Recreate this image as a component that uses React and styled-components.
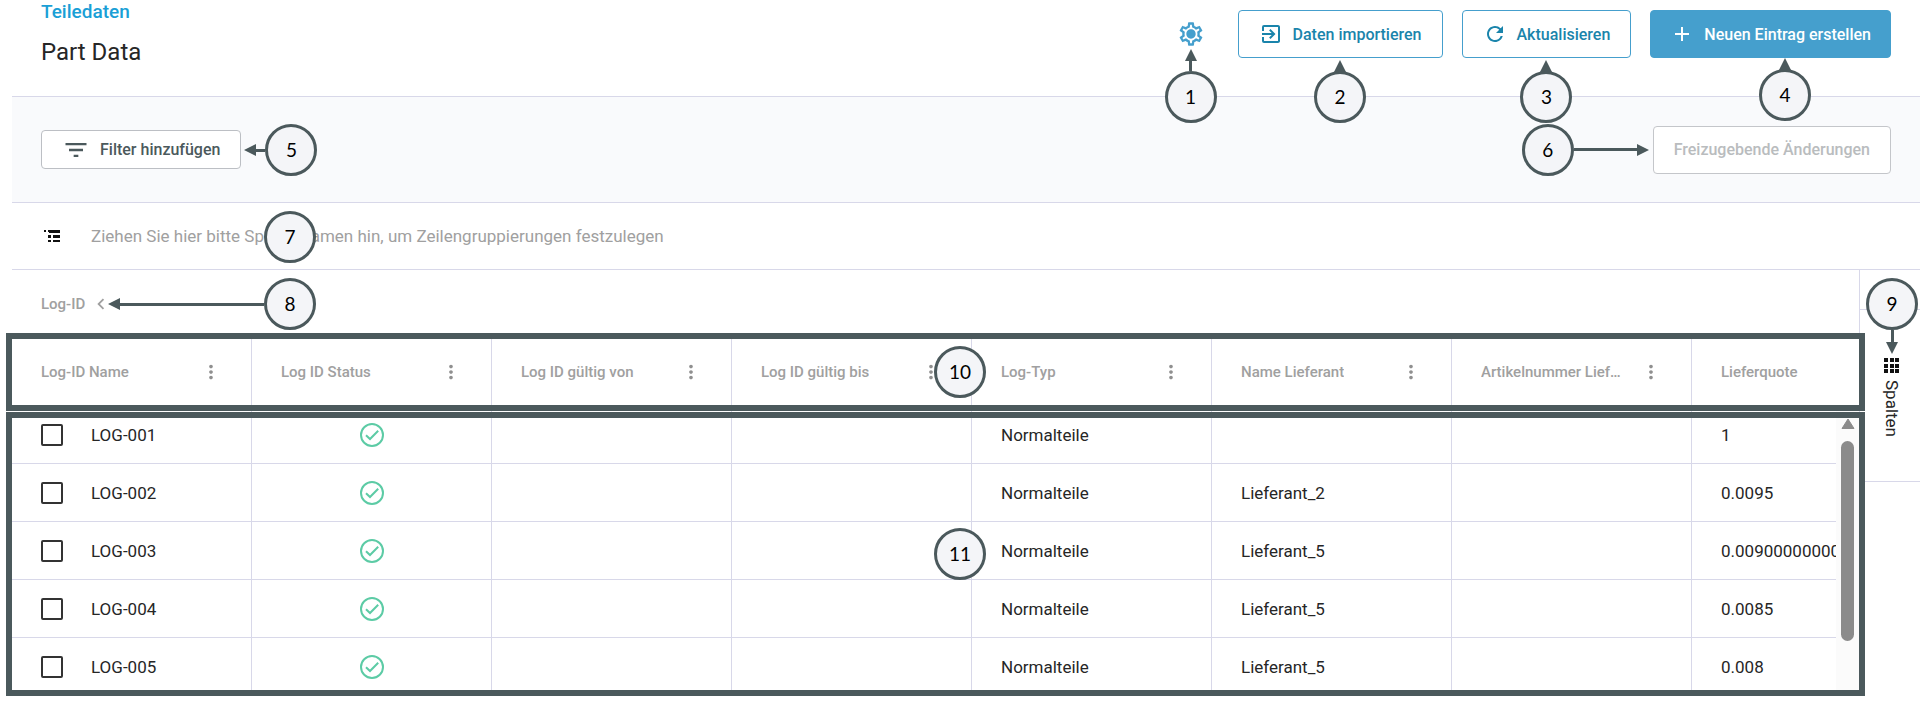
import React from 'react';
import styled, { createGlobalStyle, css } from 'styled-components';
import {
  MdAdd,
  MdChevronLeft,
  MdExitToApp,
  MdFilterList,
  MdMoreVert,
  MdOutlineSettings,
  MdRefresh,
} from 'react-icons/md';

const color = {
  ink: '#4b595c',
  line: '#d8d8e9',
  blue: '#459fcd',
  link: '#1a9fd6',
  action: '#1a84ab',
  gray: '#a0a0a0',
  text: '#262626',
  green: '#5ccba5',
  bar: '#f9fafc',
};

const GlobalStyle = createGlobalStyle`
  * { box-sizing: border-box; }
  body {
    margin: 0;
    background: #fff;
    color: ${color.text};
    font-family: Roboto, 'Liberation Sans', sans-serif;
    font-size: 17px;
  }
  button, input { font: inherit; margin: 0; }
  h1, h2, p { margin: 0; }
`;

const S = {
  Page: styled.main`
    padding: 0 0 10px 12px;
  `,
  Header: styled.header`
    display: flex;
    justify-content: space-between;
    height: 97px;
    padding: 0 29px;
    border-bottom: 1px solid ${color.line};
  `,
  Category: styled.p`
    color: ${color.link};
    font-size: 19px;
    font-weight: 500;
    line-height: 24px;
  `,
  Title: styled.h1`
    margin-top: 16px;
    font-size: 24px;
    font-weight: 400;
    line-height: 24px;
  `,
  Actions: styled.div`
    display: flex;
    align-items: flex-start;
    gap: 19px;
    padding-top: 10px;
  `,
  Anchor: styled.div`
    position: relative;
    display: flex;
  `,
  IconButton: styled.button`
    display: flex;
    align-items: center;
    justify-content: center;
    width: 56px;
    height: 48px;
    padding: 0;
    border: 0;
    background: none;
    color: ${color.blue};
  `,
  Button: styled.button`
    display: flex;
    align-items: center;
    gap: 10px;
    height: ${props => (props.$small ? '39px' : '48px')};
    padding: 0 20px;
    border: 1px solid ${color.blue};
    border-radius: 4px;
    background: #fff;
    color: ${color.action};
    font-size: 16px;
    font-weight: 500;
    white-space: nowrap;
    ${props => props.$primary && css`
      padding: 0 19px;
      background: ${color.blue};
      color: #fff;
    `}
    ${props => props.$neutral && css`
      border-color: #bcbfc4;
      color: ${color.ink};
    `}
    &:disabled {
      border-color: #c4c6ca;
      color: #b9bcbe;
    }
  `,
  FilterBar: styled.section`
    display: flex;
    align-items: center;
    justify-content: space-between;
    height: 106px;
    padding: 0 29px;
    border-bottom: 1px solid ${color.line};
    background: ${color.bar};
  `,
  GroupBar: styled.section`
    position: relative;
    display: flex;
    align-items: center;
    height: 67px;
    padding: 0 29px;
    gap: 28px;
    border-bottom: 1px solid ${color.line};
    color: ${color.gray};
  `,
  Content: styled.div`
    display: flex;
  `,
  Grid: styled.section`
    position: relative;
    flex: 1;
    min-width: 0;
    height: 420px;
  `,
  Viewport: styled.div`
    height: 100%;
    overflow: hidden;
  `,
  Table: styled.table`
    width: 100%;
    border-collapse: separate;
    border-spacing: 0;
    table-layout: fixed;
  `,
  Col: styled.col`
    width: ${props => (props.$fill ? 'auto' : '240px')};
  `,
  Group: styled.th`
    height: 68px;
    padding: 0 29px;
    color: ${color.gray};
    font-size: 15px;
    font-weight: 500;
    text-align: left;
  `,
  GroupToggle: styled.button`
    display: flex;
    align-items: center;
    gap: 5px;
    padding: 0;
    border: 0;
    background: none;
    color: inherit;
  `,
  HeadCell: styled.th`
    height: 68px;
    padding: 0 29px;
    border-right: 1px solid ${color.line};
    color: ${color.gray};
    font-size: 15px;
    font-weight: 500;
    text-align: left;
    &:last-child { border-right: 0; }
  `,
  HeadInner: styled.div`
    display: flex;
    align-items: center;
    justify-content: space-between;
    gap: 12px;
  `,
  HeadLabel: styled.span`
    overflow: hidden;
    text-overflow: ellipsis;
    white-space: nowrap;
  `,
  MenuButton: styled.button`
    display: flex;
    padding: 0;
    border: 0;
    background: none;
    color: #8f8f8f;
  `,
  Cell: styled.td`
    height: 58px;
    padding: 0 29px;
    border-right: 1px solid ${color.line};
    border-bottom: 1px solid ${color.line};
    overflow: hidden;
    white-space: nowrap;
    &:last-child { border-right: 0; }
  `,
  CheckLabel: styled.label`
    display: flex;
    align-items: center;
    gap: 28px;
  `,
  Checkbox: styled.input`
    appearance: none;
    width: 22px;
    height: 22px;
    border: 2px solid #333;
    border-radius: 2px;
    background: #fff;
  `,
  Status: styled.div`
    display: flex;
    justify-content: center;
  `,
  Scrollbar: styled.div`
    position: absolute;
    top: 136px;
    right: 0;
    bottom: 0;
    width: 23px;
    padding: 12px 5px 0;
    background: #fbfbfb;
  `,
  ScrollArrow: styled.svg`
    display: block;
    width: 14px;
    height: 12px;
  `,
  ScrollThumb: styled.div`
    width: 13px;
    height: 200px;
    margin-top: 11px;
    border-radius: 7px;
    background: #8b8b8b;
  `,
  Frame: styled.div`
    position: absolute;
    left: -6px;
    right: -6px;
    top: ${props => props.$top}px;
    height: ${props => props.$height}px;
    border: 6px solid ${color.ink};
    pointer-events: none;
  `,
  Side: styled.aside`
    width: 61px;
    height: 212px;
    padding-top: 39px;
    border-left: 1px solid ${color.line};
    border-bottom: 1px solid ${color.line};
  `,
  SideButton: styled.button`
    position: relative;
    display: flex;
    flex-direction: column;
    align-items: center;
    gap: 6px;
    width: 100%;
    height: 172px;
    padding: 48px 0 0 4px;
    border: 0;
    border-top: 1px solid ${color.line};
    background: none;
    color: ${color.text};
  `,
  SideLabel: styled.span`
    line-height: 20px;
    writing-mode: vertical-rl;
  `,
};

const direction = { up: 'column-reverse', down: 'column', left: 'row-reverse', right: 'row' };
const turn = { up: 0, right: 90, down: 180, left: 270 };

const N = {
  Note: styled.div`
    position: absolute;
    z-index: 1;
    display: flex;
    flex-direction: ${props => direction[props.$dir] || 'row'};
    align-items: center;
    pointer-events: none;
    ${props => props.$place}
  `,
  Circle: styled.span`
    position: relative;
    z-index: 1;
    display: flex;
    align-items: center;
    justify-content: center;
    width: 52px;
    height: 52px;
    border: 3px solid ${color.ink};
    border-radius: 50%;
    background: #f4f5f8;
    color: #000;
    font-family: Lato, 'Open Sans', sans-serif;
    font-size: 19px;
    line-height: 24px;
  `,
  Shaft: styled.span`
    background: ${color.ink};
    ${props => (props.$dir === 'up' || props.$dir === 'down'
    ? css`width: 3px; height: ${props.$length}px;`
    : css`height: 3px; width: ${props.$length}px;`)}
  `,
  Head: styled.svg`
    display: block;
    width: 12px;
    height: 12px;
    margin: -1px;
    transform: rotate(${props => turn[props.$dir]}deg);
  `,
};

const Note = ({ number, dir, length = 0, place }) => (
  <N.Note $dir={dir} $place={place}>
    <N.Circle>{number}</N.Circle>
    {dir && <N.Shaft $dir={dir} $length={length} />}
    {dir && (
      <N.Head $dir={dir} viewBox="0 0 12 12" aria-hidden="true">
        <path d="M6 0 12 12H0Z" fill={color.ink} />
      </N.Head>
    )}
  </N.Note>
);

const below = (top, left = '50%') => css`
  top: ${top}px;
  left: ${left};
  transform: translateX(-50%);
`;

const GearIcon = () => (
  <svg width="28" height="28" viewBox="0 0 24 24" fill="currentColor" aria-hidden="true">
    <MdOutlineSettings size={24} />
    <circle cx="12" cy="12" r="3.300" />
  </svg>
);

const GroupIcon = () => (
  <svg width="22" height="16" viewBox="0 0 22 16" fill="#111" aria-hidden="true">
    <path d="M3 2h2v2H3zM7 2h12v3H8V4H7zM7 7h3v3H7zM12 7h7v3h-7zM7 12h3v2H7zM12 12h7v2h-7z" />
  </svg>
);

const GridIcon = () => (
  <svg width="16" height="16" viewBox="0 0 16 16" fill="#111" aria-hidden="true">
    {[0, 6, 11].map(y => [0, 6, 11].map(x => (
      <rect key={`${x}-${y}`} x={x} y={y} width="4" height="4" />
    )))}
  </svg>
);

const CheckIcon = () => (
  <svg width="24" height="24" viewBox="0 0 24 24" fill="none" stroke={color.green} strokeWidth="2" role="img" aria-label="OK">
    <circle cx="12" cy="12" r="11" />
    <path d="M6 12.200 10 16 18.200 7.800" />
  </svg>
);

const columns = [
  'Log-ID Name',
  'Log ID Status',
  'Log ID gültig von',
  'Log ID gültig bis',
  'Log-Typ',
  'Name Lieferant',
  'Artikelnummer Lieferant',
  'Lieferquote',
];

const rows = [
  { id: 'LOG-001', supplier: '', rate: '1' },
  { id: 'LOG-002', supplier: 'Lieferant_2', rate: '0.0095' },
  { id: 'LOG-003', supplier: 'Lieferant_5', rate: '0.009000000000000001' },
  { id: 'LOG-004', supplier: 'Lieferant_5', rate: '0.0085' },
  { id: 'LOG-005', supplier: 'Lieferant_5', rate: '0.008' },
];

const PartTable = () => (
  <S.Table>
    <colgroup>
      {columns.map((name, i) => <S.Col key={name} $fill={i === columns.length - 1} />)}
    </colgroup>
    <thead>
      <tr>
        <S.Group colSpan={columns.length}>
          <S.GroupToggle>
            Log-ID
            <MdChevronLeft size={22} />
          </S.GroupToggle>
        </S.Group>
      </tr>
      <tr>
        {columns.map((name, i) => (
          <S.HeadCell key={name}>
            <S.HeadInner>
              <S.HeadLabel>{name}</S.HeadLabel>
              {i < columns.length - 1 && (
                <S.MenuButton aria-label={name}><MdMoreVert size={22} /></S.MenuButton>
              )}
            </S.HeadInner>
          </S.HeadCell>
        ))}
      </tr>
    </thead>
    <tbody>
      {rows.map(row => (
        <tr key={row.id}>
          <S.Cell>
            <S.CheckLabel>
              <S.Checkbox type="checkbox" />
              {row.id}
            </S.CheckLabel>
          </S.Cell>
          <S.Cell><S.Status><CheckIcon /></S.Status></S.Cell>
          <S.Cell />
          <S.Cell />
          <S.Cell>Normalteile</S.Cell>
          <S.Cell>{row.supplier}</S.Cell>
          <S.Cell />
          <S.Cell>{row.rate}</S.Cell>
        </tr>
      ))}
    </tbody>
  </S.Table>
);

const App = () => (
  <>
    <GlobalStyle />
    <S.Page>
      <S.Header>
        <div>
          <S.Category>Teiledaten</S.Category>
          <S.Title>Part Data</S.Title>
        </div>
        <S.Actions>
          <S.Anchor>
            <S.IconButton aria-label="Einstellungen"><GearIcon /></S.IconButton>
            <Note number="1" dir="up" length={11} place={below(40)} />
          </S.Anchor>
          <S.Anchor>
            <S.Button><MdExitToApp size={24} />Daten importieren</S.Button>
            <Note number="2" dir="up" place={below(51)} />
          </S.Anchor>
          <S.Anchor>
            <S.Button><MdRefresh size={24} />Aktualisieren</S.Button>
            <Note number="3" dir="up" place={below(51)} />
          </S.Anchor>
          <S.Anchor>
            <S.Button $primary><MdAdd size={24} />Neuen Eintrag erstellen</S.Button>
            <Note number="4" dir="up" place={below(49, '56%')} />
          </S.Anchor>
        </S.Actions>
      </S.Header>

      <S.FilterBar>
        <S.Anchor>
          <S.Button $small $neutral><MdFilterList size={28} />Filter hinzufügen</S.Button>
          <Note number="5" dir="left" length={10} place="left: calc(100% + 4px); top: -6px;" />
        </S.Anchor>
        <S.Anchor>
          <S.Button disabled>Freizugebende Änderungen</S.Button>
          <Note number="6" dir="right" length={64} place="right: calc(100% + 5px); top: -2px;" />
        </S.Anchor>
      </S.FilterBar>

      <S.GroupBar>
        <GroupIcon />
        <span>Ziehen Sie hier bitte Spaltennamen hin, um Zeilengruppierungen festzulegen</span>
        <Note number="7" place="left: 252px; top: 8px;" />
      </S.GroupBar>

      <S.Content>
        <S.Grid>
          <S.Viewport>
            <PartTable />
          </S.Viewport>
          <S.Scrollbar>
            <S.ScrollArrow viewBox="0 0 14 12"><path d="M7 1 13 10.500H1Z" fill="#8b8b8b" stroke="#8b8b8b" strokeLinejoin="round" /></S.ScrollArrow>
            <S.ScrollThumb />
          </S.Scrollbar>
          <S.Frame $top={63} $height={78} />
          <S.Frame $top={142} $height={284} />
          <Note number="8" dir="left" length={145} place="left: 97px; top: 8px;" />
          <Note number="10" place="left: 922px; top: 76px;" />
          <Note number="11" place="left: 922px; top: 258px;" />
        </S.Grid>
        <S.Side>
          <S.SideButton>
            <GridIcon />
            <S.SideLabel>Spalten</S.SideLabel>
            <Note number="9" dir="down" length={13} place="left: 6px; top: -32px;" />
          </S.SideButton>
        </S.Side>
      </S.Content>
    </S.Page>
  </>
);

export default App;
